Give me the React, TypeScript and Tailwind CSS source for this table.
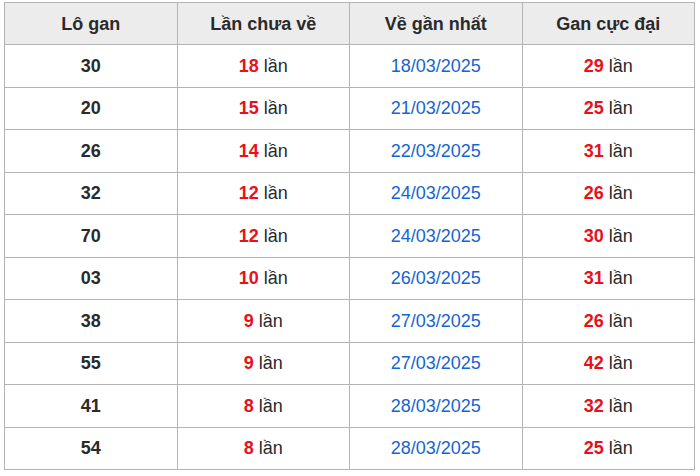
import React from "react";

const rows: [string, string, string, string][] = [
  ["30", "18", "18/03/2025", "29"],
  ["20", "15", "21/03/2025", "25"],
  ["26", "14", "22/03/2025", "31"],
  ["32", "12", "24/03/2025", "26"],
  ["70", "12", "24/03/2025", "30"],
  ["03", "10", "26/03/2025", "31"],
  ["38", "9", "27/03/2025", "26"],
  ["55", "9", "27/03/2025", "42"],
  ["41", "8", "28/03/2025", "32"],
  ["54", "8", "28/03/2025", "25"],
];

export default function App() {
  return (
    <div className="bg-white pl-[4px] pt-[2px]" style={{ fontFamily: '"Liberation Sans", Arial, sans-serif' }}>
      <table className="w-[691px] border-collapse table-fixed text-[18px] text-[#2a2a2a]">
        <thead>
          <tr className="h-[42px] bg-[#ececec]">
            {["Lô gan", "Lần chưa về", "Về gần nhất", "Gan cực đại"].map((h) => (
              <th key={h} className="border border-[#b3b3b3] font-bold text-center p-0 pt-[1px]">
                {h}
              </th>
            ))}
          </tr>
        </thead>
        <tbody>
          {rows.map((r, i) => (
            <tr key={i} className="h-[42.5px]">
              <td className="border border-[#b3b3b3] text-center font-bold p-0 pt-[1px]">{r[0]}</td>
              <td className="border border-[#b3b3b3] text-center p-0 pt-[1px]">
                <span className="font-bold text-[#e8101a]">{r[1]}</span> lần
              </td>
              <td className="border border-[#b3b3b3] text-center p-0 pt-[1px] text-[#1565d0]">{r[2]}</td>
              <td className="border border-[#b3b3b3] text-center p-0 pt-[1px]">
                <span className="font-bold text-[#e8101a]">{r[3]}</span> lần
              </td>
            </tr>
          ))}
        </tbody>
      </table>
    </div>
  );
}
